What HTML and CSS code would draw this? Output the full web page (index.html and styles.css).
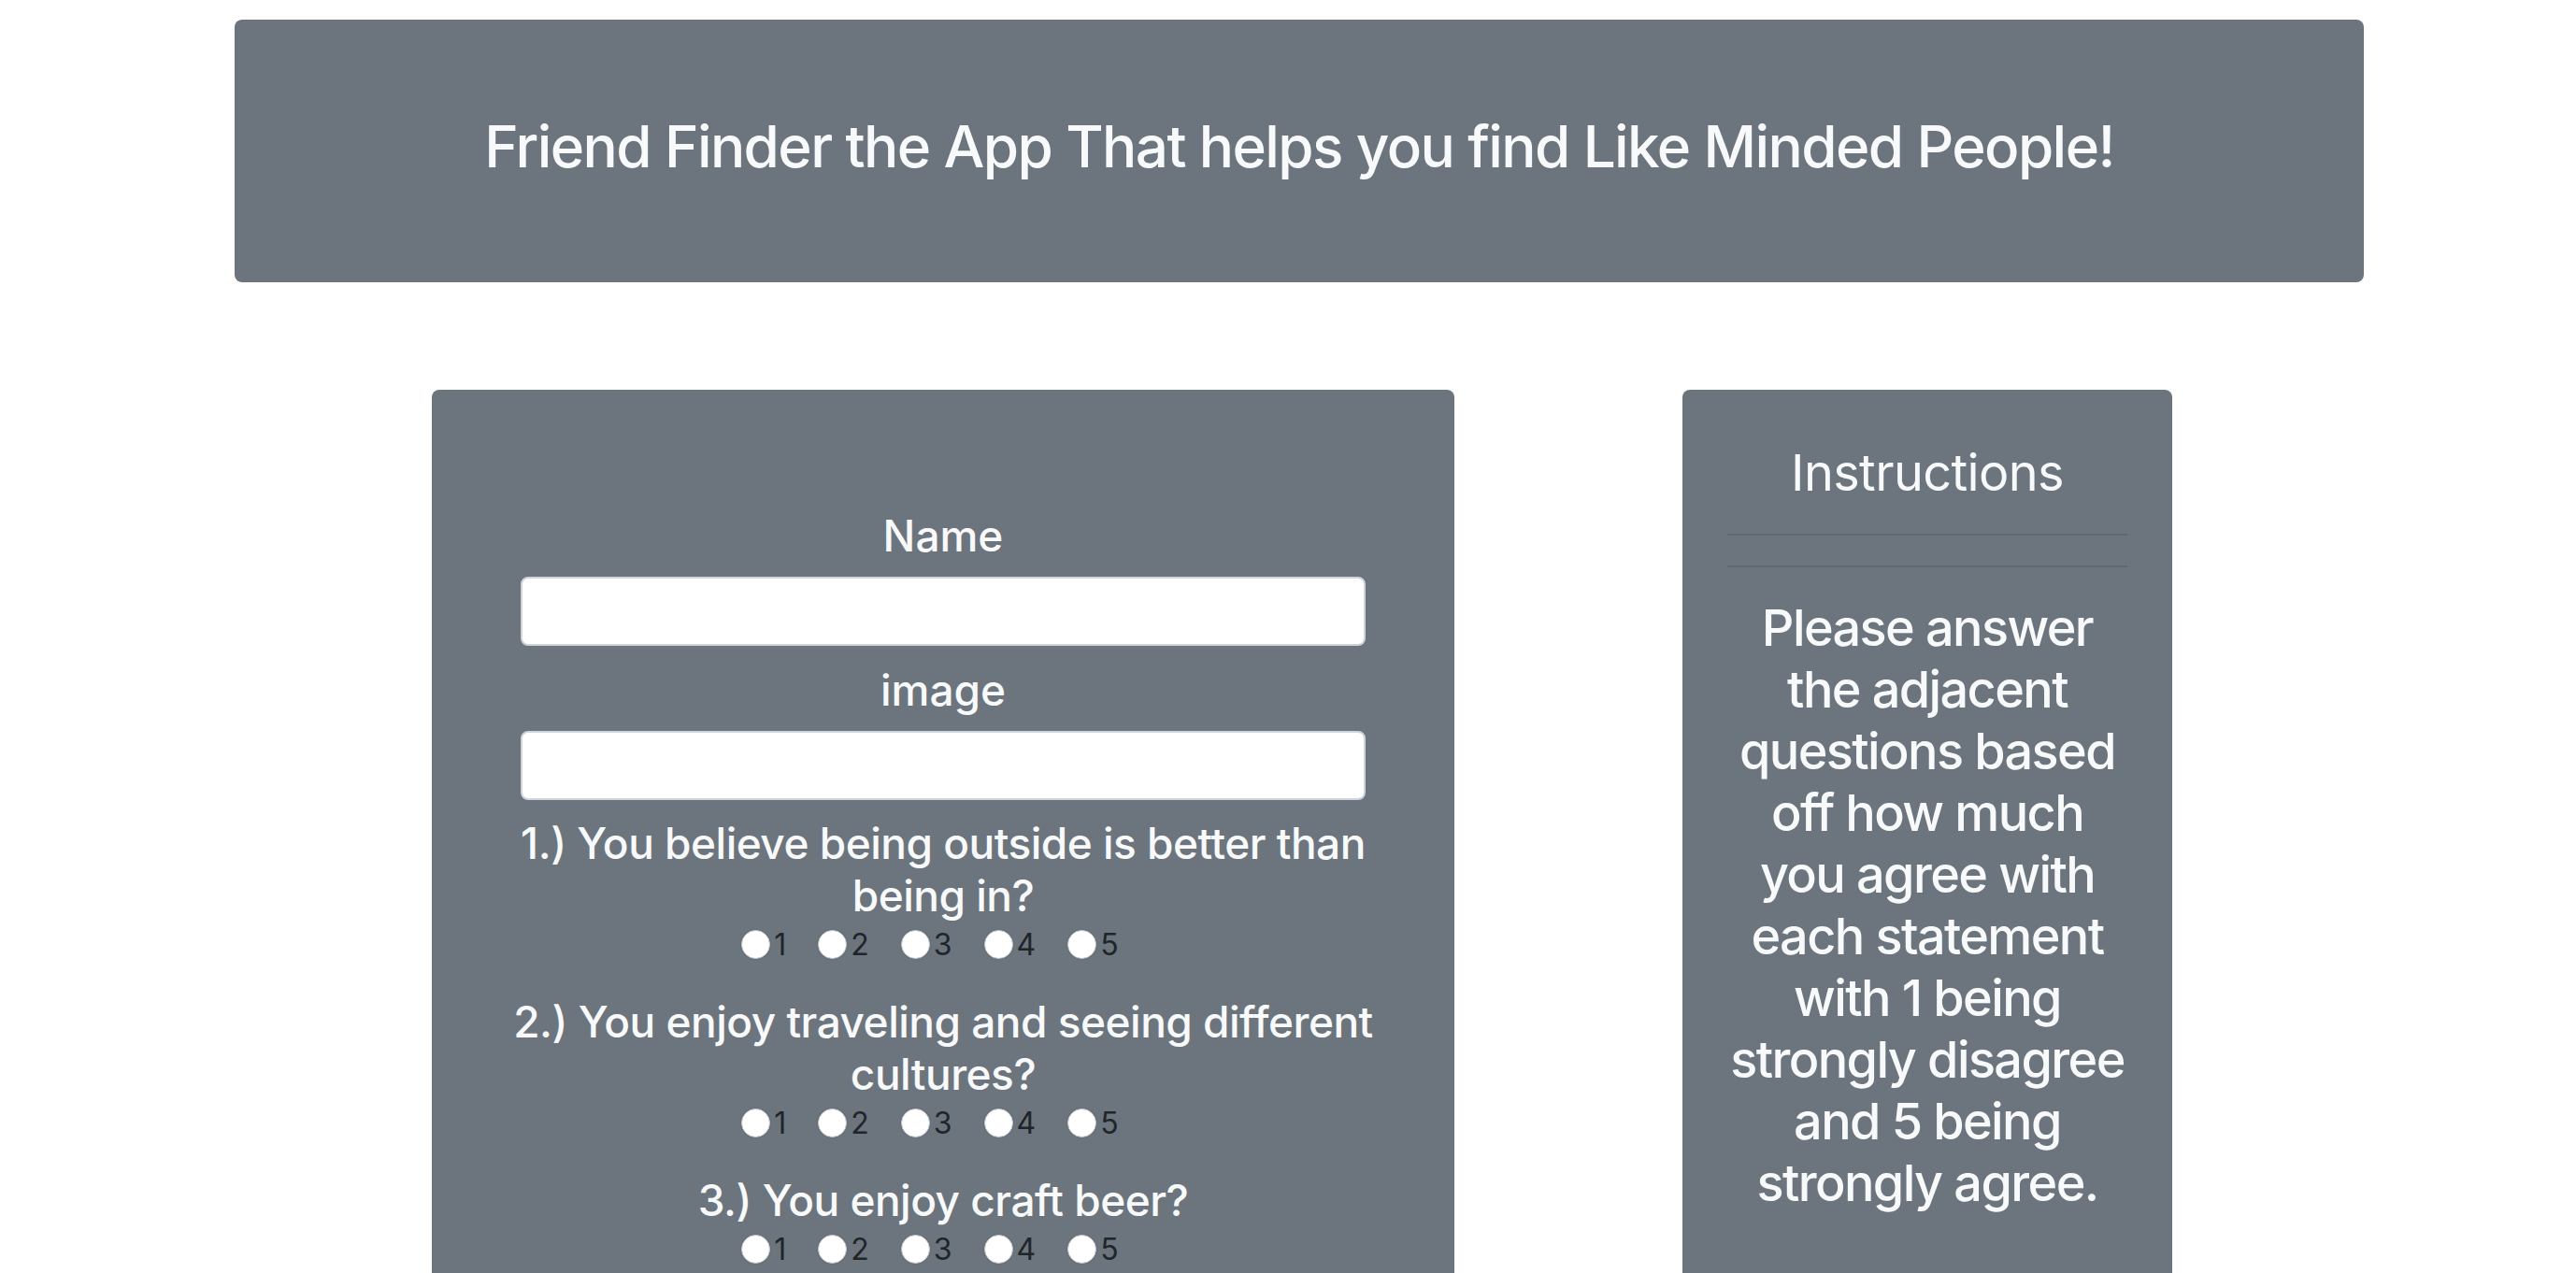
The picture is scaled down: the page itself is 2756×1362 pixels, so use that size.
FILE: index.html
```html
<!DOCTYPE html>
<html lang="en">
<head>
<meta charset="UTF-8">
<meta name="viewport" content="width=device-width, initial-scale=1.0">
<title>Friend Finder</title>
<link rel="stylesheet" href="styles.css">
</head>
<body>
<div class="page">
  <header class="banner">
    <h1>Friend Finder the App That helps you find Like Minded People!</h1>
  </header>

  <main class="content">
    <form class="panel survey" id="survey-form">
      <label class="field-label" for="name-input">Name</label>
      <input class="field" type="text" id="name-input">
      <label class="field-label" for="image-input">image</label>
      <input class="field" type="text" id="image-input">

      <div class="question">
        <h4>1.) You believe being outside is better than being in?</h4>
        <div class="scale">
          <label><input type="radio" name="q1" value="1">1</label>
          <label><input type="radio" name="q1" value="2">2</label>
          <label><input type="radio" name="q1" value="3">3</label>
          <label><input type="radio" name="q1" value="4">4</label>
          <label><input type="radio" name="q1" value="5">5</label>
        </div>
      </div>

      <div class="question">
        <h4>2.) You enjoy traveling and seeing different cultures?</h4>
        <div class="scale">
          <label><input type="radio" name="q2" value="1">1</label>
          <label><input type="radio" name="q2" value="2">2</label>
          <label><input type="radio" name="q2" value="3">3</label>
          <label><input type="radio" name="q2" value="4">4</label>
          <label><input type="radio" name="q2" value="5">5</label>
        </div>
      </div>

      <div class="question">
        <h4>3.) You enjoy craft beer?</h4>
        <div class="scale">
          <label><input type="radio" name="q3" value="1">1</label>
          <label><input type="radio" name="q3" value="2">2</label>
          <label><input type="radio" name="q3" value="3">3</label>
          <label><input type="radio" name="q3" value="4">4</label>
          <label><input type="radio" name="q3" value="5">5</label>
        </div>
      </div>
    </form>

    <aside class="panel instructions">
      <h3 class="instructions-title">Instructions</h3>
      <hr>
      <hr>
      <h3 class="instructions-text">Please answer the adjacent questions based off how much you agree with each statement with 1 being strongly disagree and 5 being strongly agree.</h3>
    </aside>
  </main>
</div>
</body>
</html>
```

FILE: styles.css
```css
body {
  margin: 0;
  font-family: Inter, "Noto Sans", Arial, sans-serif;
  background-color: #fff;
  color: #212529;
}
.page {
  width: 2278px;
  margin: 21px 0 0 251px;
}
.banner {
  height: 281px;
  background-color: #6c757d;
  border-radius: 8px;
  display: flex;
  align-items: center;
  justify-content: center;
}
.banner h1 {
  margin: 0 0 10px;
  font-size: 62px;
  font-weight: 500;
  color: #f8f9fa;
  letter-spacing: -1.6px;
}
.content {
  display: flex;
  align-items: flex-start;
  gap: 244px;
  margin-top: 115px;
  padding-left: 211px;
}
.panel {
  background-color: #6c757d;
  border-radius: 8px;
  color: #f8f9fa;
  text-align: center;
}
.survey {
  width: 1094px;
  box-sizing: border-box;
  padding: 127px 95px 80px;
  display: flex;
  flex-direction: column;
}
.field-label {
  display: block;
  font-size: 46px;
  font-weight: 500;
  line-height: 58px;
  margin-bottom: 15px;
}
.field {
  height: 74px;
  box-sizing: border-box;
  border: 2px solid #ced4da;
  border-radius: 8px;
  background: #fff;
  margin-bottom: 18px;
  font-size: 32px;
  padding: 0 24px;
}
.question {
  margin-bottom: 31px;
}
.question h4 {
  margin: 0 -10px;
  font-size: 46px;
  font-weight: 500;
  line-height: 56px;
  letter-spacing: -0.5px;
}
.scale {
  display: flex;
  justify-content: center;
  gap: 34px;
  height: 48px;
  align-items: center;
  padding-right: 28px;
}
.scale label {
  display: flex;
  align-items: center;
  gap: 4px;
  font-size: 32px;
  color: #212529;
}
.scale input {
  appearance: none;
  -webkit-appearance: none;
  width: 31px;
  height: 31px;
  margin: 0;
  border-radius: 50%;
  background: #fff;
  border: 1px solid #c4c8cc;
  box-shadow: 0 0 2px rgba(0, 0, 0, 0.15);
}
.instructions {
  width: 524px;
  box-sizing: border-box;
  padding: 55px 48px 80px;
}
.instructions h3 {
  margin: 0;
  font-size: 54px;
  line-height: 67px;
}
.instructions .instructions-title {
  font-weight: 400;
  letter-spacing: -0.6px;
}
.instructions .instructions-text {
  font-weight: 500;
  line-height: 66px;
  letter-spacing: -1.6px;
}
.instructions hr {
  border: 0;
  border-top: 2px solid rgba(0, 0, 0, 0.1);
  margin: 32px 0;
}
```
